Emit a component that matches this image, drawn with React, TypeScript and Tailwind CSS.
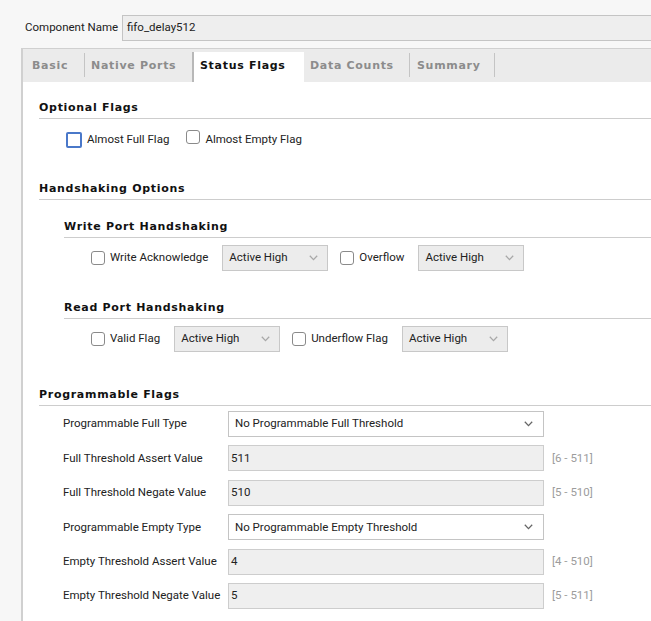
import type { ReactNode } from 'react'

// Body text is a plain sans; section headings and tabs use a tracked bold.
const bodyFont = "font-['Roboto','Liberation_Sans',sans-serif] text-[11.5px] text-[#222] whitespace-nowrap"
const headFont = "font-['DejaVu_Sans',sans-serif] font-bold text-[11px] tracking-[0.7px]"

function Chevron({ className }: { className?: string }) {
	return (
		<svg width="9" height="6" viewBox="0 0 9 6" className={className} aria-hidden>
			<path d="M0.8 0.8 L4.5 4.6 L8.2 0.8" fill="none" stroke="currentColor" strokeWidth="1.3" />
		</svg>
	)
}

function Checkbox({ focused = false }: { focused?: boolean }) {
	return focused
		? <span className="inline-block size-[16px] shrink-0 rounded-[2px] border-2 border-[#4a78c9] bg-white" />
		: <span className="inline-block size-[14px] shrink-0 rounded-[3px] border border-[#8a8a8a] bg-white" />
}

function Heading({ children, className }: { children: ReactNode, className?: string }) {
	return (
		<div className={`border-b border-[#cdcdcd] pb-[3px] leading-[14px] text-[#111] ${headFont} ${className ?? ''}`}>
			{children}
		</div>
	)
}

function ActiveSelect() {
	return (
		<div className="flex h-[26px] w-[106px] shrink-0 items-center justify-between border border-[#c8c8c8] bg-[#ececec] pl-[6px] pr-[9px]">
			<span>Active High</span>
			<Chevron className="text-[#a8a8a8]" />
		</div>
	)
}

function FlagRow({ items }: { items: string[] }) {
	return (
		<div className="ml-[52px] flex items-center">
			{items.map((label, i) => (
				<div key={label} className={`flex items-center ${i > 0 ? 'ml-[12px]' : ''}`}>
					<Checkbox />
					<span className="ml-[5px] mr-[14px]">{label}</span>
					<ActiveSelect />
				</div>
			))}
		</div>
	)
}

interface ProgRow {
	label: string
	kind: 'select' | 'input'
	value: string
	range?: string
}

const progRows: ProgRow[] = [
	{ label: 'Programmable Full Type', kind: 'select', value: 'No Programmable Full Threshold' },
	{ label: 'Full Threshold Assert Value', kind: 'input', value: '511', range: '[6 - 511]' },
	{ label: 'Full Threshold Negate Value', kind: 'input', value: '510', range: '[5 - 510]' },
	{ label: 'Programmable Empty Type', kind: 'select', value: 'No Programmable Empty Threshold' },
	{ label: 'Empty Threshold Assert Value', kind: 'input', value: '4', range: '[4 - 510]' },
	{ label: 'Empty Threshold Negate Value', kind: 'input', value: '5', range: '[5 - 511]' },
]

const tabs = ['Basic', 'Native Ports', 'Status Flags', 'Data Counts', 'Summary']

function TabSep() {
	return <span className="mb-[5px] h-[24px] w-px shrink-0 bg-[#c4c4c4]" />
}

export default function App() {
	return (
		<div className={`h-[621px] w-[651px] overflow-hidden bg-[#f7f7f7] ${bodyFont}`}>
			{/* Component name */}
			<div className="flex items-center pl-[25px] pt-[15px]">
				<span className="w-[97px] shrink-0">Component Name</span>
				<div className="-mr-[20px] flex h-[26px] flex-1 items-center border border-[#c4c4c4] bg-[#eeeeee] pl-[4px]">
					fifo_delay512
				</div>
			</div>

			{/* Tab pane */}
			<div className="ml-[21px] mt-[7px] -mr-[20px] border-l-2 border-t border-[#d0d0d0] bg-white pb-[40px]">
				<div className={`flex h-[33px] items-end bg-[#ebebeb] ${headFont} text-[#8c8c8c]`}>
					<div className="flex h-[30px] w-[61px] items-center pb-[2px] pl-[9px]">{tabs[0]}</div>
					<TabSep />
					<div className="flex h-[30px] w-[107px] items-center pb-[2px] pl-[6px]">{tabs[1]}</div>
					<div className="flex h-[30px] w-[112px] items-center border-l-2 border-[#b8b8b8] bg-white pb-[2px] pl-[6px] text-[#111]">{tabs[2]}</div>
					<div className="flex h-[30px] w-[105px] items-center pb-[2px] pl-[6px]">{tabs[3]}</div>
					<TabSep />
					<div className="flex h-[30px] w-[84px] items-center pb-[2px] pl-[7px]">{tabs[4]}</div>
					<TabSep />
				</div>

				<div className="pl-[16px]">
					<Heading className="mt-[19px]">Optional Flags</Heading>
					<div className="ml-[27px] mt-[13px] flex h-[16px] items-center">
						<Checkbox focused />
						<span className="ml-[5px]">Almost Full Flag</span>
						<span className="ml-[17px]"><Checkbox /></span>
						<span className="ml-[5px]">Almost Empty Flag</span>
					</div>

					<Heading className="mt-[34px]">Handshaking Options</Heading>
					<Heading className="ml-[25px] mt-[20px]">Write Port Handshaking</Heading>
					<div className="mt-[7px]">
						<FlagRow items={['Write Acknowledge', 'Overflow']} />
					</div>
					<Heading className="ml-[25px] mt-[30px]">Read Port Handshaking</Heading>
					<div className="mt-[7px]">
						<FlagRow items={['Valid Flag', 'Underflow Flag']} />
					</div>

					<Heading className="mt-[36px]">Programmable Flags</Heading>
					<div className="ml-[24px] mt-[5px] flex flex-col gap-[8.4px]">
						{progRows.map(row => (
							<div key={row.label} className="flex items-center">
								<span className="w-[165px] shrink-0">{row.label}</span>
								{row.kind === 'select'
									? (
										<div className="flex h-[26px] w-[316px] items-center justify-between border border-[#c4c4c4] bg-white pl-[6px] pr-[10px]">
											<span>{row.value}</span>
											<Chevron className="text-[#666]" />
										</div>
									)
									: (
										<div className="flex h-[26px] w-[316px] items-center border border-[#cdcdcd] bg-[#efefef] pl-[2px]">
											{row.value}
										</div>
									)}
								{row.range && <span className="ml-[8px] text-[#9c9c9c]">{row.range}</span>}
							</div>
						))}
					</div>
				</div>
			</div>
		</div>
	)
}
